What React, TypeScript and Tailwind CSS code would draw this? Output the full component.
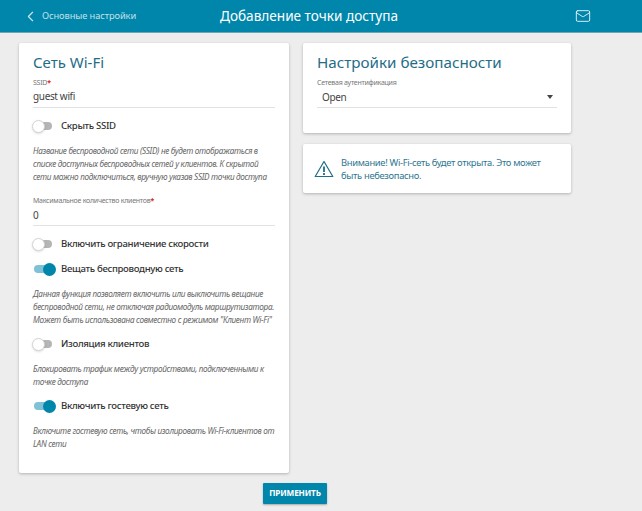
import type { ReactNode } from 'react';
import { ChevronLeft, Mail } from 'lucide-react';

function Switch({ on, label }: { on?: boolean; label: string }) {
    return (
        <div className="flex items-center h-[14px] text-[9.6px] tracking-[-0.33px] font-medium text-[#333333]">
            <span className="relative block w-[21px] h-[8px] shrink-0 mr-[6px] ml-[1px]">
                {on ? (
                    <>
                        <span className="absolute inset-0 rounded-full bg-[#7fc2d5]" />
                        <span className="absolute right-[-1px] top-[-2.5px] w-[13px] h-[13px] rounded-full bg-[#0086ab]" />
                    </>
                ) : (
                    <>
                        <span className="absolute inset-y-0 left-0 right-[3px] rounded-full bg-[#b5b5b5]" />
                        <span className="absolute left-[-2px] top-[-2.5px] w-[13px] h-[13px] rounded-full bg-white border border-[#d4d4d4] shadow-sm" />
                    </>
                )}
            </span>
            {label}
        </div>
    );
}

function Hint({ children }: { children: ReactNode }) {
    return <p className="mt-[11px] text-[8.2px] tracking-[-0.31px] leading-[13px] italic text-[#666666]">{children}</p>;
}

const Req = () => <span className="text-[#e02020] font-bold">*</span>;

export default function App() {
    return (
        <div className="min-h-[511px] bg-[#ededed] font-['Noto_Sans',sans-serif]">
            <header className="h-[33px] bg-[#0086ab] border-b border-[#6fa5b5] flex items-center text-white">
                <ChevronLeft className="w-[17px] h-[17px] ml-[22px] text-[#cfe6ed]" strokeWidth={1.6} />
                <span className="ml-[3px] w-[92px] text-[9.3px] tracking-[-0.1px] whitespace-nowrap text-[#c3e0e9]">Основные настройки</span>
                <span className="ml-[86px] w-[176px] text-[13.6px] whitespace-nowrap">Добавление точки доступа</span>
                <Mail className="w-[16px] h-[16px] ml-[179px] text-[#e6f3f7]" strokeWidth={1.4} />
            </header>

            <div className="w-[552px] ml-[19px] pt-[10px]">
                <div className="flex gap-[14px] items-start">
                    <section className="w-[270px] h-[430px] shrink-0 bg-white rounded-[2px] shadow-[0_1px_3px_rgba(0,0,0,0.25)] px-[14px] pt-[8px]">
                        <h2 className="text-[15px] leading-[22px] text-[#1f6d87]">Сеть Wi-Fi</h2>
                        <div className="mt-[5px] text-[7px] tracking-[-0.25px] leading-[10px] text-[#777777]">SSID<Req /></div>
                        <div className="text-[10px] tracking-[-0.35px] leading-[14px] pt-[1px] pb-[4px] text-[#444444] border-b border-[#e2e2e2]">guest wifi</div>
                        <div className="mt-[11px] mb-[1px]"><Switch label="Скрыть SSID" /></div>
                        <Hint>
                            Название беспроводной сети (SSID) не будет отображаться в
                            списке доступных беспроводных сетей у клиентов. К скрытой
                            сети можно подключиться, вручную указав SSID точки доступа
                        </Hint>
                        <div className="mt-[13px] text-[7px] tracking-[-0.25px] leading-[10px] text-[#777777]">Максимальное количество клиентов<Req /></div>
                        <div className="text-[10px] tracking-[-0.35px] leading-[14px] pt-[2px] pb-[3px] text-[#444444] border-b border-[#e2e2e2]">0</div>
                        <div className="mt-[11px]"><Switch label="Включить ограничение скорости" /></div>
                        <div className="mt-[11px]"><Switch on label="Вещать беспроводную сеть" /></div>
                        <Hint>
                            Данная функция позволяет включить или выключить вещание
                            беспроводной сети, не отключая радиомодуль маршрутизатора.
                            Может быть использована совместно с режимом "Клиент Wi-Fi"
                        </Hint>
                        <div className="mt-[11px]"><Switch label="Изоляция клиентов" /></div>
                        <Hint>
                            Блокировать трафик между устройствами, подключенными к
                            точке доступа
                        </Hint>
                        <div className="mt-[11px]"><Switch on label="Включить гостевую сеть" /></div>
                        <Hint>
                            Включите гостевую сеть, чтобы изолировать Wi-Fi-клиентов от
                            LAN сети
                        </Hint>
                    </section>

                    <div className="w-[268px] shrink-0 flex flex-col gap-[11px]">
                        <section className="h-[90px] bg-white rounded-[2px] shadow-[0_1px_3px_rgba(0,0,0,0.25)] px-[14px] pt-[8px]">
                            <h2 className="text-[15.2px] leading-[22px] text-[#1f6d87]">Настройки безопасности</h2>
                            <div className="mt-[5px] text-[7px] tracking-[-0.25px] leading-[10px] text-[#777777]">Сетевая аутентификация</div>
                            <div className="flex items-center justify-between pl-[5px] pr-[4px] pt-[2px] pb-[3px] text-[10px] tracking-[-0.35px] leading-[14px] text-[#444444] border-b border-[#e2e2e2]">
                                Open
                                <span className="w-0 h-0 border-x-[3.5px] border-x-transparent border-t-[4px] border-t-[#444444]" />
                            </div>
                        </section>
                        <section className="h-[49px] bg-white rounded-[2px] shadow-[0_1px_3px_rgba(0,0,0,0.25)] pl-[11px] pr-[10px] flex items-center gap-[7px]">
                            <svg width="20" height="18" viewBox="0 0 20 18" fill="none" stroke="#1f6d87" strokeWidth="1.2" className="shrink-0">
                                <path d="M10 1.5 L18.8 16.5 H1.2 Z" strokeLinejoin="round" />
                                <path d="M10 6.5 V12" strokeWidth="1.8" />
                                <path d="M10 13 V15" strokeWidth="1.8" />
                            </svg>
                            <p className="text-[9.4px] tracking-[-0.33px] leading-[13px] text-[#2f7590]">Внимание! Wi-Fi-сеть будет открыта. Это может быть небезопасно.</p>
                        </section>
                    </div>
                </div>
                <div className="flex justify-center mt-[10px]">
                    <button className="w-[64px] h-[21px] bg-[#0086ab] rounded-[1px] shadow-[0_1px_2px_rgba(0,0,0,0.3)] text-white text-[8.2px] tracking-[-0.15px] font-bold">ПРИМЕНИТЬ</button>
                </div>
            </div>
        </div>
    );
}
